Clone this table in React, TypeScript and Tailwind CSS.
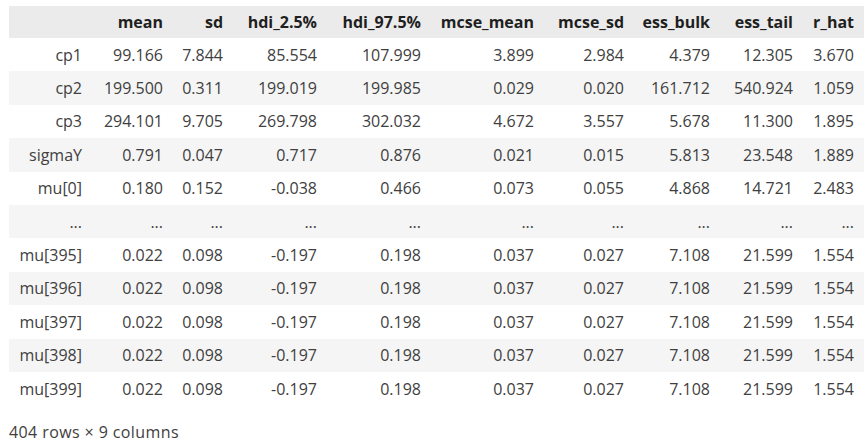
import React from "react";

const cols = ["mean", "sd", "hdi_2.5%", "hdi_97.5%", "mcse_mean", "mcse_sd", "ess_bulk", "ess_tail", "r_hat"];
const widths = [83, 81, 60, 94, 104, 113, 90, 86, 83, 61];

const mu = ["0.022", "0.098", "-0.197", "0.198", "0.037", "0.027", "7.108", "21.599", "1.554"];
const rows: [string, string[]][] = [
  ["cp1", ["99.166", "7.844", "85.554", "107.999", "3.899", "2.984", "4.379", "12.305", "3.670"]],
  ["cp2", ["199.500", "0.311", "199.019", "199.985", "0.029", "0.020", "161.712", "540.924", "1.059"]],
  ["cp3", ["294.101", "9.705", "269.798", "302.032", "4.672", "3.557", "5.678", "11.300", "1.895"]],
  ["sigmaY", ["0.791", "0.047", "0.717", "0.876", "0.021", "0.015", "5.813", "23.548", "1.889"]],
  ["mu[0]", ["0.180", "0.152", "-0.038", "0.466", "0.073", "0.055", "4.868", "14.721", "2.483"]],
  ["...", ["...", "...", "...", "...", "...", "...", "...", "...", "..."]],
  ["mu[395]", mu],
  ["mu[396]", mu],
  ["mu[397]", mu],
  ["mu[398]", mu],
  ["mu[399]", mu],
];

export default function App() {
  return (
    <div
      className="w-[864px] h-[447px] overflow-hidden bg-white text-[16px] text-[#404040]"
      style={{ fontFamily: '"Open Sans", "Noto Sans", sans-serif' }}
    >
      <table className="table-fixed border-collapse ml-[9px] mt-[6px] w-[855px]">
        <colgroup>
          {widths.map((w, i) => (
            <col key={i} style={{ width: w }} />
          ))}
        </colgroup>
        <thead>
          <tr className="bg-[#ebebeb] h-[32px]">
            <th className="p-0"></th>
            {cols.map((c) => (
              <th key={c} className="p-0 pr-[10px] text-right font-bold text-[#1f1f1f] whitespace-nowrap">
                {c}
              </th>
            ))}
          </tr>
        </thead>
        <tbody>
          {rows.map(([name, vals], i) => (
            <tr key={i} className={`h-[33.4px] ${i % 2 === 1 ? "bg-[#f5f5f5]" : "bg-white"}`}>
              <th className="p-0 pr-[10px] text-right font-normal whitespace-nowrap">{name}</th>
              {vals.map((v, j) => (
                <td key={j} className="p-0 pr-[10px] text-right whitespace-nowrap">
                  {v}
                </td>
              ))}
            </tr>
          ))}
        </tbody>
      </table>
      <p className="ml-[9px] mt-[16px] leading-[22px] tracking-[0.4px]">404 rows × 9 columns</p>
    </div>
  );
}
